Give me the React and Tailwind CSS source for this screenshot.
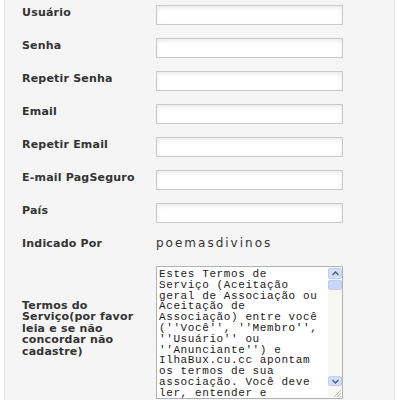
import React from 'react';

const fields = ['Usuário', 'Senha', 'Repetir Senha', 'Email', 'Repetir Email', 'E-mail PagSeguro', 'País'];

const terms = [
    'Estes Termos de',
    'Serviço (Aceitação',
    'geral de Associação ou',
    'Aceitação de',
    'Associação) entre você',
    "(''Você'', ''Membro'',",
    "''Usuário'' ou",
    "''Anunciante'') e",
    'IlhaBux.cu.cc apontam',
    'os termos de sua',
    'associação. Você deve',
    'ler, entender e',
    'aceitar os termos e',
];

function Label({ children, className = '' }) {
    return (
        <div className={`w-[152px] shrink-0 pl-[17px] text-[11px] font-bold tracking-[0.2px] text-[#333] ${className}`}>
            {children}
        </div>
    );
}

function TextInput() {
    return (
        <div className="h-[20px] w-[187px] border border-[#c9c9c9] bg-white shadow-[inset_0_2px_4px_rgba(0,0,0,0.09)]" />
    );
}

function ScrollBar() {
    return (
        <div className="flex w-[14px] shrink-0 flex-col bg-[#f7f7f4]">
            {/* up arrow */}
            <div className="mt-[1px] flex h-[11px] items-center justify-center rounded-[2px] border border-[#bccdf0] bg-[#d3def7]">
                <svg width="7" height="5" viewBox="0 0 7 5"><path d="M0.5 4 L3.5 1 L6.5 4" fill="none" stroke="#4d6185" strokeWidth="1.5" /></svg>
            </div>
            {/* thumb */}
            <div className="mt-[1px] h-[10px] rounded-[2px] border border-[#bccdf0] bg-[#c9d7f7]" />
            <div className="flex-1" />
            {/* down arrow */}
            <div className="flex h-[10px] items-center justify-center rounded-[2px] border border-[#bccdf0] bg-[#d3def7]">
                <svg width="7" height="5" viewBox="0 0 7 5"><path d="M0.5 1 L3.5 4 L6.5 1" fill="none" stroke="#4d6185" strokeWidth="1.5" /></svg>
            </div>
            {/* resize grip */}
            <div className="flex h-[12px] items-end justify-end">
                <svg width="10" height="10" viewBox="0 0 10 10">
                    <path d="M9 2 L2 9 M9 5 L5 9 M9 8 L8 9" stroke="#b8b8b8" strokeWidth="1" />
                </svg>
            </div>
        </div>
    );
}

export default function App() {
    return (
        <div className="h-[400px] w-[400px] overflow-hidden bg-white" style={{ fontFamily: '"DejaVu Sans", Verdana, sans-serif' }}>
            <div className="ml-[4px] h-full w-[391px] border-l border-r border-[#e2e2e2] bg-[#f5f5f5]">
                {fields.map((f) => (
                    <div key={f} className="flex h-[33px] items-start pt-[5px]">
                        <Label className="mt-[1px] whitespace-nowrap leading-[13px]">{f}</Label>
                        <div className="ml-[-1px]"><TextInput /></div>
                    </div>
                ))}

                <div className="flex h-[35px] items-start pt-[5px]">
                    <Label className="mt-[1px] leading-[13px]">Indicado Por</Label>
                    <div className="ml-[-1px] mt-[1px] text-[12px] leading-[13px] tracking-[2px] text-[#333]">poemasdivinos</div>
                </div>

                <div className="flex items-center">
                    <Label className="pb-[8px] leading-[11.6px]">
                        Termos do<br />Serviço(por favor<br />leia e se não<br />concordar não<br />cadastre)
                    </Label>
                    <div className="ml-[-1px] flex h-[133px] w-[187px] border border-[#aeb3b9] bg-white">
                        <div className="flex-1 overflow-hidden pl-[2px] pt-[2px] text-[11px] leading-[10.8px] tracking-[0.6px] text-[#1a1a1a]" style={{ fontFamily: '"Liberation Mono", "Courier New", monospace' }}>
                            {terms.map((l, i) => (
                                <div key={i} className="whitespace-pre">{l}</div>
                            ))}
                        </div>
                        <ScrollBar />
                    </div>
                </div>
            </div>
        </div>
    );
}
